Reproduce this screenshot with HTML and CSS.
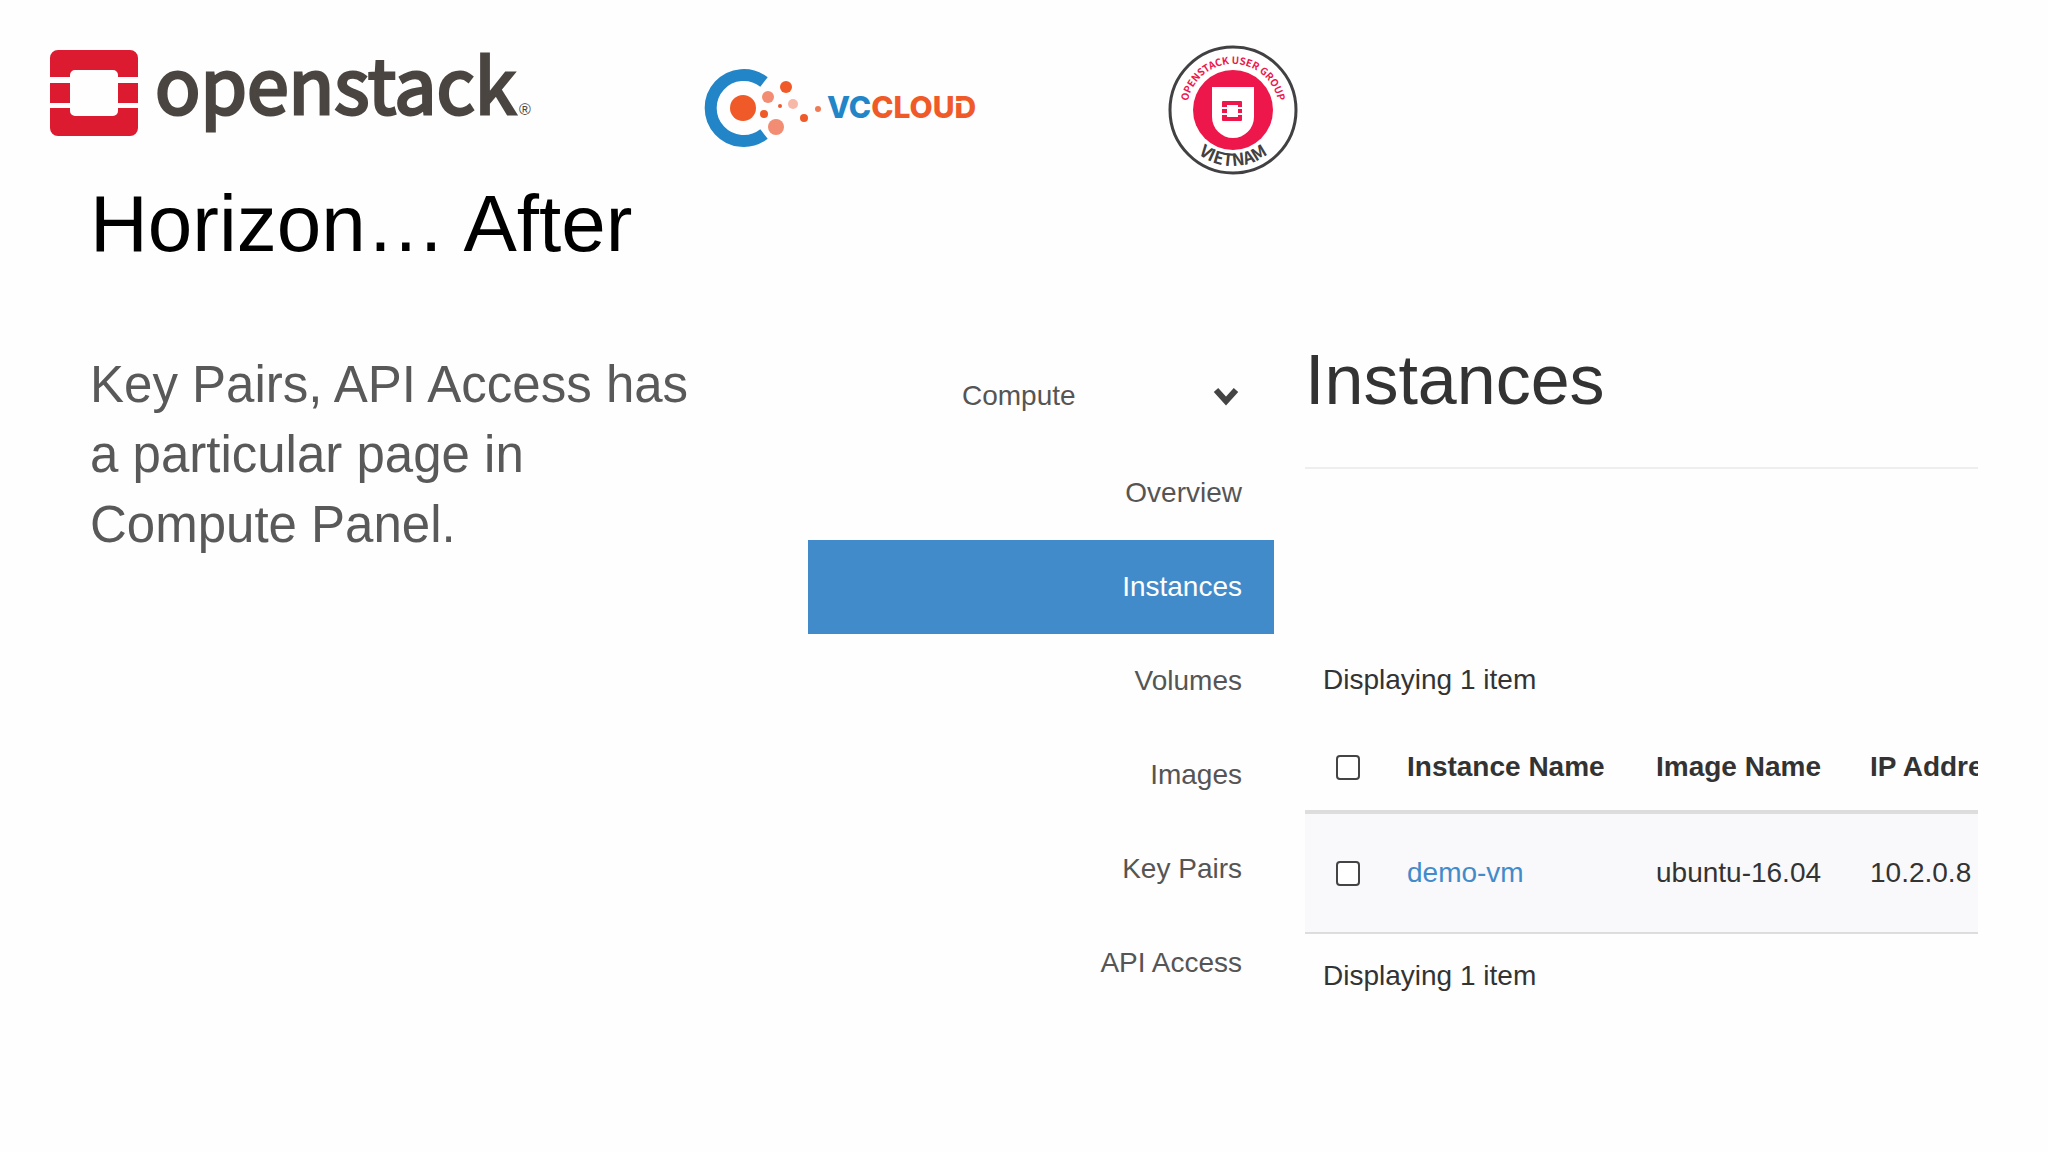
FILE: index.html
```html
<!DOCTYPE html>
<html lang="en">
<head>
    <meta charset="UTF-8">
    <meta name="viewport" content="width=device-width, initial-scale=1.0">
    <title>Horizon… After</title>
    <link rel="stylesheet" href="styles.css">
</head>
<body>
    <header class="logos">
        <svg class="logo-openstack" viewBox="0 0 484 100" role="img" aria-label="openstack">
            <g fill="#dc1a30">
                <path d="M8 10h72a8 8 0 0 1 8 8v19H68v-2a5 5 0 0 0-5-5H25a5 5 0 0 0-5 5v2H0V18a8 8 0 0 1 8-8z"/>
                <path d="M0 43h20v20H0zM68 43h20v20H68z"/>
                <path d="M0 68h20v3a5 5 0 0 0 5 5h38a5 5 0 0 0 5-5v-3h20v20a8 8 0 0 1-8 8H8a8 8 0 0 1-8-8z"/>
            </g>
            <text class="openstack-word" x="105" y="74">openstack</text>
            <text class="openstack-mark" x="469" y="75">®</text>
        </svg>
        <svg class="logo-vccloud" viewBox="0 0 280 80" role="img" aria-label="VCCLOUD">
            <path d="M60 14A33 33 0 1 0 60 66" fill="none" stroke="#2185c7" stroke-width="12"/>
            <circle cx="39" cy="40" r="13" fill="#f05a28"/>
            <circle cx="64" cy="29" r="6" fill="#f28c73"/>
            <circle cx="82" cy="19" r="6" fill="#f05a28"/>
            <circle cx="60" cy="46" r="4" fill="#f05a28"/>
            <circle cx="76" cy="38" r="2" fill="#f05a28"/>
            <circle cx="89" cy="36" r="5" fill="#f7b8a8"/>
            <circle cx="72" cy="59" r="8" fill="#f28c73"/>
            <circle cx="100" cy="50" r="4" fill="#f05a28"/>
            <circle cx="114" cy="41" r="3" fill="#f07a55"/>
            <text class="vccloud-word" x="123" y="50"><tspan fill="#2185c7">VC</tspan><tspan fill="#f05a28">CLOUD</tspan></text>
            <path d="M249 34h9" stroke="#fefefe" stroke-width="2"/>
        </svg>
        <svg class="logo-group" viewBox="0 0 132 132" role="img" aria-label="OpenStack User Group Vietnam">
            <defs>
                <path id="arc-top" d="M20 66a46 46 0 0 1 92 0"/>
                <path id="arc-bottom" d="M10 66a56 56 0 0 0 112 0"/>
            </defs>
            <circle cx="66" cy="66" r="63" fill="#fff" stroke="#414042" stroke-width="3"/>
            <circle cx="66" cy="66" r="40" fill="#ed174b"/>
            <path d="M45 43h42v30a21 21 0 0 1-42 0z" fill="#fff"/>
            <path d="M56 57h18a1 1 0 0 1 1 1v5h-4v-2H60v2h-5v-5a1 1 0 0 1 1-1zM55 65h5v4h-5zM71 65h4v4h-4zM55 71h5v2h11v-2h4v5a1 1 0 0 1-1 1H56a1 1 0 0 1-1-1z" fill="#ed174b"/>
            <text class="group-top"><textPath href="#arc-top" startOffset="50%">OPENSTACK USER GROUP</textPath></text>
            <text class="group-bottom"><textPath href="#arc-bottom" startOffset="50%">VIETNAM</textPath></text>
        </svg>
    </header>

    <h1>Horizon… After</h1>

    <main class="content">
        <p class="summary">Key Pairs, API Access has a particular page in Compute Panel.</p>

        <nav class="sidebar">
            <button class="panel-toggle" type="button">
                Compute
                <svg class="chevron" viewBox="0 0 26 20" aria-hidden="true">
                    <path d="M3 4l10 11L23 4" fill="none" stroke="#444" stroke-width="6"/>
                </svg>
            </button>
            <ul class="panel-list">
                <li><a href="#">Overview</a></li>
                <li><a href="#" class="active">Instances</a></li>
                <li><a href="#">Volumes</a></li>
                <li><a href="#">Images</a></li>
                <li><a href="#">Key Pairs</a></li>
                <li><a href="#">API Access</a></li>
            </ul>
        </nav>

        <section class="instances">
            <h2>Instances</h2>
            <p class="count">Displaying 1 item</p>
            <table>
                <thead>
                    <tr>
                        <th class="check"><input type="checkbox" aria-label="Select all"></th>
                        <th class="name">Instance Name</th>
                        <th class="image">Image Name</th>
                        <th>IP Address</th>
                    </tr>
                </thead>
                <tbody>
                    <tr>
                        <td class="check"><input type="checkbox" aria-label="Select demo-vm"></td>
                        <td><a href="#">demo-vm</a></td>
                        <td>ubuntu-16.04</td>
                        <td>10.2.0.8</td>
                    </tr>
                </tbody>
            </table>
            <p class="count">Displaying 1 item</p>
        </section>
    </main>
</body>
</html>
```
FILE: styles.css
```css
* {
    box-sizing: border-box;
}
body {
    font-family: "Liberation Sans", Arial, sans-serif;
    background-color: #fefefe;
    color: #333;
    margin: 0;
    padding: 40px 70px 40px 90px;
}
h1 {
    font-size: 80px;
    font-weight: normal;
    line-height: 92px;
    color: #000;
    margin: 0;
}
.logos {
    display: flex;
    height: 138px;
    margin-left: -40px;
}
.logo-openstack {
    width: 484px;
    height: 100px;
    overflow: visible;
}
.logo-vccloud {
    width: 280px;
    height: 80px;
    margin: 28px 0 0 170px;
    overflow: visible;
}
.logo-group {
    width: 132px;
    height: 132px;
    margin: 4px 0 0 183px;
}
.openstack-word {
    font-family: "Noto Sans CJK SC", sans-serif;
    font-size: 75px;
    fill: #4a4541;
    stroke: #4a4541;
    stroke-width: 3px;
}
.openstack-mark {
    font-size: 16px;
    fill: #4a4541;
}
.vccloud-word {
    font-family: Inter, sans-serif;
    font-size: 30px;
    font-weight: 800;
}
.group-top {
    font-family: "Noto Sans CJK SC", sans-serif;
    font-size: 10px;
    font-weight: 700;
    fill: #ed174b;
    text-anchor: middle;
}
.group-bottom {
    font-family: "Noto Sans CJK SC", sans-serif;
    font-size: 17px;
    font-weight: 700;
    fill: #414042;
    text-anchor: middle;
}
.content {
    display: grid;
    grid-template-columns: 687fr 466fr 673fr;
    column-gap: 31px;
    margin-top: 64px;
}
.summary {
    font-size: 51px;
    line-height: 70px;
    color: #595959;
    margin: 16px 60px 0 0;
}
.sidebar,
.instances {
    font-size: 28px;
    line-height: 40px;
}
.sidebar {
    margin-top: 12px;
}
.panel-toggle {
    display: flex;
    justify-content: space-between;
    align-items: center;
    width: 100%;
    height: 100px;
    padding: 0 35px 0 154px;
    font: inherit;
    color: #555;
    background: none;
    border: none;
    cursor: pointer;
}
.chevron {
    width: 26px;
    height: 20px;
}
.panel-list {
    list-style: none;
    margin: 0;
    padding: 0;
}
.panel-list a {
    display: block;
    padding: 27px 32px;
    text-align: right;
    text-decoration: none;
    color: #555;
}
.panel-list .active {
    background-color: #428bca;
    color: #fff;
}
.instances {
    overflow: hidden;
}
.instances h2 {
    font-size: 70px;
    font-weight: normal;
    line-height: 92px;
    margin: 0 0 191px;
    padding-bottom: 41px;
    border-bottom: 2px solid #eee;
}
.count {
    margin: 0;
    padding: 0 18px;
}
table {
    width: 760px;
    table-layout: fixed;
    border-spacing: 0;
    margin: 24px 0 22px;
}
th,
td {
    padding: 0 19px;
    text-align: left;
    white-space: nowrap;
}
th {
    height: 90px;
    border-bottom: 4px solid #ddd;
}
td {
    height: 120px;
    background-color: #f9f8fa;
    border-bottom: 2px solid #ddd;
}
td a {
    color: #428bca;
    text-decoration: none;
}
.check {
    width: 83px;
    padding-left: 31px;
}
.name {
    width: 249px;
}
.image {
    width: 214px;
}
input[type="checkbox"] {
    appearance: none;
    display: block;
    width: 24px;
    height: 25px;
    margin: 0;
    border: 2px solid #444;
    border-radius: 4px;
    background-color: #fff;
}
```
